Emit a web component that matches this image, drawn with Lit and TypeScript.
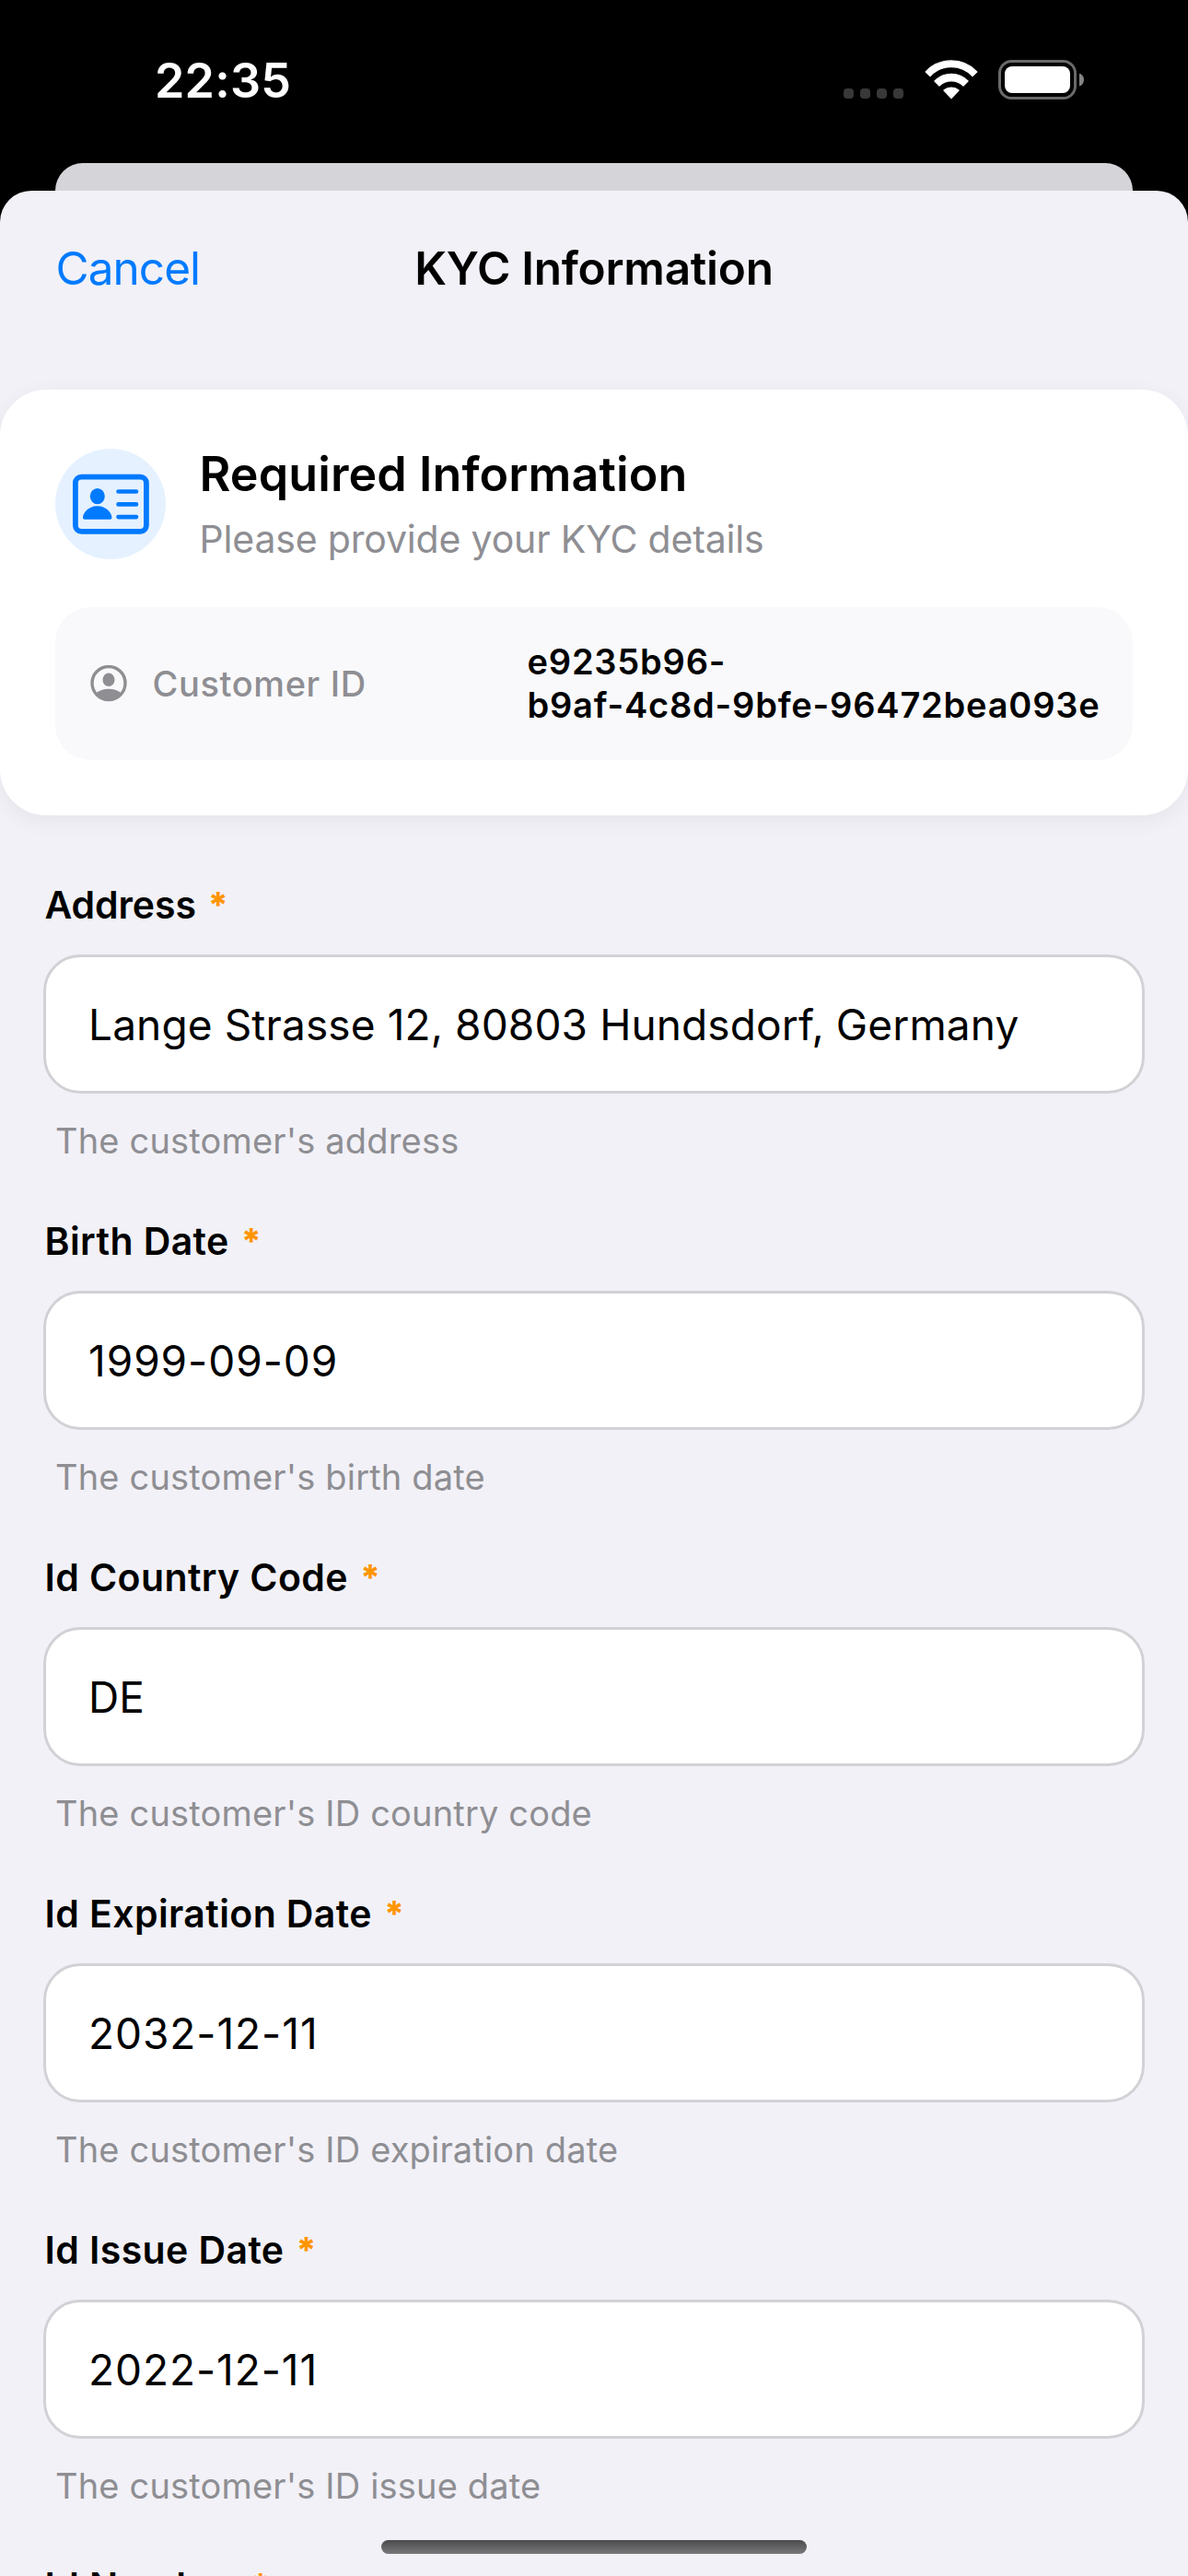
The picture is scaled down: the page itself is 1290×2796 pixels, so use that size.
import { LitElement, html, css, svg } from "lit";
import { customElement, property } from "lit/decorators.js";
import { classMap } from "lit/directives/class-map.js";

interface Field {
  label: string;
  value: string;
  help: string;
  tightLabel?: boolean;
  numeric?: boolean;
}

const FIELDS: Field[] = [
  { label: "Address", value: "Lange Strasse 12, 80803 Hundsdorf, Germany", help: "The customer's address", tightLabel: true },
  { label: "Birth Date", value: "1999-09-09", help: "The customer's birth date", numeric: true },
  { label: "Id Country Code", value: "DE", help: "The customer's ID country code" },
  { label: "Id Expiration Date", value: "2032-12-11", help: "The customer's ID expiration date", numeric: true },
  { label: "Id Issue Date", value: "2022-12-11", help: "The customer's ID issue date", numeric: true },
  { label: "Id Number", value: "", help: "" },
];

@customElement("status-bar")
class StatusBar extends LitElement {
  static styles = css`
    :host {
      display: flex;
      justify-content: space-between;
      align-items: flex-start;
      box-sizing: border-box;
      height: 177px;
      padding: 57px 113px 0 168px;
      color: #fff;
    }
    .time {
      font-size: 52px;
      font-weight: 600;
      line-height: 62px;
      letter-spacing: 0.2px;
    }
    .icons {
      display: flex;
      align-items: flex-start;
      padding-top: 8px;
    }
    svg { display: block; }
    .dots { margin: 31px 22px 0 0; }
    .wifi { margin-right: 22px; }
  `;

  render() {
    return html`
      <div class="time">22:35</div>
      <div class="icons">
        <svg class="dots" width="66" height="11" viewBox="0 0 66 11" fill="#383838">
          ${[0, 18, 36, 54].map((x) => svg`<rect x=${x} y="0" width="11" height="11" rx="4"></rect>`)}
        </svg>
        <svg class="wifi" width="58" height="43" viewBox="0 0 58 43" fill="#fff" stroke="#fff" stroke-width="1.4" stroke-linejoin="round">
          <path d="M1.3 12.9A38 38 0 0 1 56.7 12.9L52 17.6A31.5 31.5 0 0 0 6 17.6Z"></path>
          <path d="M11 23A25 25 0 0 1 47 23L42 28A19 19 0 0 0 16 28Z"></path>
          <path d="M21 33A12.5 12.5 0 0 1 37 33L29 41.4Z"></path>
        </svg>
        <svg width="93" height="43" viewBox="0 0 93 43">
          <rect x="1.5" y="1.5" width="82" height="40" rx="13" fill="none" stroke="#6a6a6a" stroke-width="3"></rect>
          <rect x="7" y="7" width="71" height="29" rx="8" fill="#fff"></rect>
          <path d="M88 14.7C91.2 15.4 93 18.2 93 21.5S91.2 27.6 88 28.4Z" fill="#858585"></path>
        </svg>
      </div>
    `;
  }
}

@customElement("kyc-summary")
class KycSummary extends LitElement {
  static styles = css`
    :host {
      display: block;
      box-sizing: border-box;
      height: 462px;
      padding: 62px 60px 0;
      border-radius: 50px;
      background: #fff;
      box-shadow: 0 6px 24px rgba(0, 0, 0, 0.055);
    }
    svg { display: block; flex: none; }
    .head {
      display: flex;
      gap: 36.5px;
      height: 138px;
      margin-bottom: 36px;
    }
    .badge { margin-top: 2px; }
    .title {
      font-size: 52px;
      font-weight: 600;
      line-height: 60px;
      letter-spacing: 0.1px;
    }
    .subtitle {
      margin-top: 15px;
      color: #8e8e93;
      font-size: 41px;
      line-height: 50px;
      letter-spacing: -0.17px;
    }
    .row {
      display: flex;
      align-items: center;
      box-sizing: border-box;
      height: 166px;
      padding: 0 36px 0 38px;
      border-radius: 38px;
      background: #f9f9fb;
    }
    .key {
      margin-left: 27.5px;
      color: #8e8e93;
      font-size: 38px;
      font-weight: 500;
      line-height: 50px;
      letter-spacing: 0.62px;
    }
    .id {
      width: 621.5px;
      margin-left: auto;
      font-size: 38px;
      font-weight: 600;
      line-height: 47px;
      letter-spacing: 0.8px;
      white-space: nowrap;
    }
  `;

  render() {
    return html`
      <div class="head">
        <svg class="badge" width="120" height="120" viewBox="0 0 120 120">
          <circle cx="60" cy="60" r="60" fill="#e5f1ff"></circle>
          <rect x="21.9" y="30.6" width="77" height="59.2" rx="6.5" fill="none" stroke="#007aff" stroke-width="5.8"></rect>
          <ellipse cx="45.8" cy="51.6" rx="8" ry="8.6" fill="#007aff"></ellipse>
          <path d="M31.8 76.7C30.6 76.7 30 76 30 74.8C30 70.8 35 62.3 45.7 62.3S61.4 70.8 61.4 74.8C61.4 76 60.8 76.7 59.6 76.7Z" fill="#007aff"></path>
          <path d="M68.5 46.5H88M68.5 60.4H88M68.5 74.1H88" stroke="#007aff" stroke-width="4.6" stroke-linecap="round"></path>
        </svg>
        <div>
          <div class="title">Required Information</div>
          <div class="subtitle">Please provide your KYC details</div>
        </div>
      </div>
      <div class="row">
        <svg width="40" height="40" viewBox="0 0 40 40" fill="#8e8e93">
          <circle cx="20" cy="19.5" r="18" fill="none" stroke="#8e8e93" stroke-width="3.4"></circle>
          <ellipse cx="20" cy="15.8" rx="6.5" ry="7.3"></ellipse>
          <path d="M6 30.7Q11.5 25.7 20 25.7T34 30.7Q28 38.1 20 38.1T6 30.7Z"></path>
        </svg>
        <div class="key">Customer ID</div>
        <div class="id">e9235b96-<br />b9af-4c8d-9bfe-96472bea093e</div>
      </div>
    `;
  }
}

@customElement("form-field")
class FormField extends LitElement {
  @property({ attribute: false }) field!: Field;

  static styles = css`
    :host {
      display: block;
      box-sizing: border-box;
      height: 365px;
      flex: none;
    }
    .label {
      display: flex;
      gap: 13px;
      padding-left: 1.5px;
      font-size: 41px;
      font-weight: 600;
      line-height: 50px;
      letter-spacing: 0.4px;
    }
    .label.tight { letter-spacing: -0.1px; }
    .required { color: #ff9500; font-size: 38px; font-weight: 800; }
    .input {
      box-sizing: border-box;
      height: 151px;
      margin-top: 29px;
      padding: 45px 46px 0;
      border: 3px solid #d1d1d6;
      border-radius: 40px;
      background: #fff;
      font-size: 46px;
      line-height: 56px;
      letter-spacing: 0.12px;
      white-space: nowrap;
    }
    .input.numeric { letter-spacing: 0.95px; }
    .help {
      margin-top: 28px;
      padding-left: 13px;
      color: #8e8e93;
      font-size: 38px;
      line-height: 46px;
      letter-spacing: 0.17px;
    }
  `;

  render() {
    const { label, value, help, tightLabel, numeric } = this.field;
    return html`
      <div class=${classMap({ label: true, tight: !!tightLabel })}>
        <span>${label}</span><span class="required">*</span>
      </div>
      <div class=${classMap({ input: true, numeric: !!numeric })}>${value}</div>
      <div class="help">${help}</div>
    `;
  }
}

@customElement("app-root")
class AppRoot extends LitElement {
  static styles = css`
    :host {
      display: block;
      position: relative;
      width: 1290px;
      height: 2796px;
      overflow: hidden;
      background: #000;
      color: #000;
      font-family: Inter, "Liberation Sans", sans-serif;
    }
    .behind {
      height: 30px;
      margin: 0 60px;
      border-radius: 30px 30px 0 0;
      background: #d5d4d9;
    }
    .sheet {
      height: 2589px;
      overflow: hidden;
      border-radius: 34px 34px 0 0;
      background: #f2f1f7;
    }
    .nav {
      display: grid;
      grid-template-columns: 1fr auto 1fr;
      box-sizing: border-box;
      height: 216px;
      padding: 54px 60.5px 0;
      font-size: 49.5px;
      line-height: 60px;
    }
    .cancel { color: #007aff; letter-spacing: -0.95px; }
    .heading { font-weight: 600; letter-spacing: -0.26px; }
    .form {
      display: flex;
      flex-direction: column;
      padding: 72px 47px 0;
    }
    .home {
      position: absolute;
      left: 414px;
      bottom: 24px;
      width: 462px;
      height: 15px;
      border-radius: 8px;
      background: linear-gradient(#4b4b4c, #79797c);
    }
  `;

  render() {
    return html`
      <status-bar></status-bar>
      <div class="behind"></div>
      <div class="sheet">
        <div class="nav">
          <span class="cancel">Cancel</span>
          <span class="heading">KYC Information</span>
        </div>
        <kyc-summary></kyc-summary>
        <div class="form">
          ${FIELDS.map((f) => html`<form-field .field=${f}></form-field>`)}
        </div>
      </div>
      <div class="home"></div>
    `;
  }
}
